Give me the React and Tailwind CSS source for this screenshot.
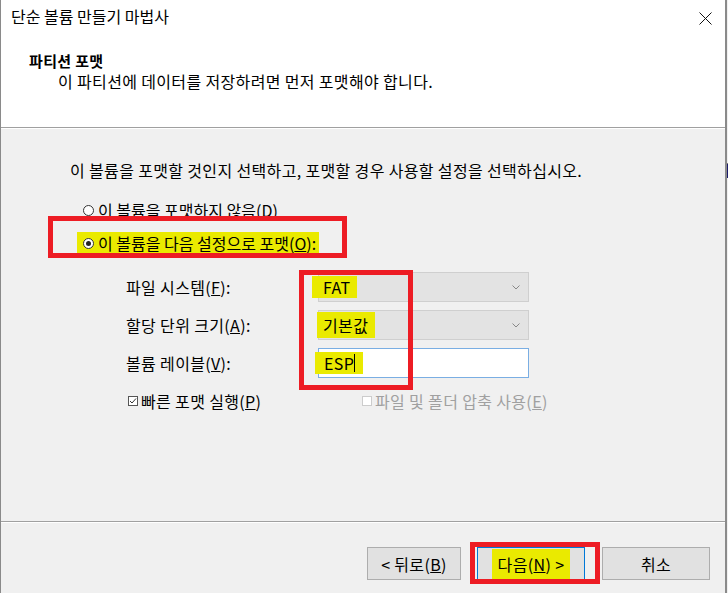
import { useState } from 'react';

const font = { fontFamily: '"Noto Sans CJK KR", "Noto Sans", sans-serif' };

function Radio({ checked }) {
  return (
    <span className="inline-flex w-[11px] h-[11px] rounded-full border border-[#333] bg-white items-center justify-center mr-[4px] shrink-0">
      {checked && <span className="w-[5px] h-[5px] rounded-full bg-[#222]" />}
    </span>
  );
}

function Check({ checked, disabled }) {
  return (
    <span
      className={
        'inline-flex w-[10px] h-[10px] border items-center justify-center mr-[3px] shrink-0 ' +
        (disabled ? 'border-[#ccc] bg-white' : 'border-[#555] bg-white')
      }
    >
      {checked && (
        <svg width="8" height="8" viewBox="0 0 8 8">
          <path d="M1 4 L3 6 L7 1.5" fill="none" stroke="#333" strokeWidth="1" />
        </svg>
      )}
    </span>
  );
}

function Combo({ children }) {
  return (
    <div className="w-[211px] h-[30px] bg-[#e3e3e3] border border-[#cfcfcf] flex items-center justify-between pr-[8px]">
      {children}
      <svg width="8" height="5" viewBox="0 0 8 5">
        <path d="M0.5 0.5 L4 4 L7.5 0.5" fill="none" stroke="#888" strokeWidth="1" />
      </svg>
    </div>
  );
}

function Mark({ children, className = '' }) {
  return <span className={'bg-[#eaea00] ' + className}>{children}</span>;
}

export default function App() {
  const [label, setLabel] = useState('ESP');

  return (
    <div className="w-[728px] h-[593px] relative overflow-hidden flex bg-[#2a2a2a] text-[#000] tracking-[0.35px]" style={font}>
      <div className="w-[727px] h-full flex flex-col bg-[#f0f0f0] border-l border-r-2 border-[#8a8a8a]">
        {/* header */}
        <div className="h-[128px] bg-white border-b border-[#a0a0a0] relative shrink-0">
          <div className="pl-[10px] pt-[6px] text-[16px] leading-[20px] tracking-normal">단순 볼륨 만들기 마법사</div>
          <svg className="absolute left-[698px] top-[12px]" width="13" height="13" viewBox="0 0 13 13">
            <path d="M0.5 0.5 L12.5 12.5 M12.5 0.5 L0.5 12.5" stroke="#111" strokeWidth="1" />
          </svg>
          <div className="pl-[28px] pt-[25px] text-[15px] leading-[20px] font-bold">파티션 포맷</div>
          <div className="pl-[57px] text-[16px] leading-[20px]">이 파티션에 데이터를 저장하려면 먼저 포맷해야 합니다.</div>
        </div>

        {/* body */}
        <div className="flex-1 border-t border-white pl-[69px] pt-[31px] text-[16px] leading-[20px]">
          <div>이 볼륨을 포맷할 것인지 선택하고, 포맷할 경우 사용할 설정을 선택하십시오.</div>

          <div className="flex items-center ml-[13px] mt-[20px] tracking-normal">
            <Radio />
            <span>
              이 볼륨을 포맷하지 않음(<u>D</u>)
            </span>
          </div>

          <div className="flex items-center ml-[7px] mt-[12px] tracking-normal">
            <Mark className="flex items-center pl-[6px] pr-[3px] py-[1px]">
              <Radio checked />
              <span>
                이 볼륨을 다음 설정으로 포맷(<u>O</u>):
              </span>
            </Mark>
          </div>

          <div className="ml-[56px] mt-[18px] grid grid-cols-[192px_211px] gap-y-[8px] items-center">
            <span>
              파일 시스템(<u>F</u>):
            </span>
            <Combo>
              <Mark className="-ml-[7px] pl-[11px] pr-[6px] py-[1px]">FAT</Mark>
            </Combo>
            <span>
              할당 단위 크기(<u>A</u>):
            </span>
            <Combo>
              <Mark className="-ml-[2px] pl-[6px] pr-[7px] py-[3px]">기본값</Mark>
            </Combo>
            <span>
              볼륨 레이블(<u>V</u>):
            </span>
            <div className="w-[211px] h-[30px] bg-white border border-[#7aaee3] flex items-center">
              <Mark className="-ml-[4px] flex items-center pl-[9px] pr-[8px] py-[1px]">
                <input
                  value={label}
                  onChange={(e) => setLabel(e.target.value)}
                  className="w-[31px] bg-transparent outline-none text-[16px] leading-[20px] p-0 tracking-[0.35px]"
                  style={font}
                />
                <span className="w-[1px] h-[18px] bg-black -ml-[1px]" />
              </Mark>
            </div>
          </div>

          <div className="ml-[58px] mt-[13px] flex items-center">
            <div className="w-[234px] flex items-center">
              <Check checked />
              <span>
                빠른 포맷 실행(<u>P</u>)
              </span>
            </div>
            <div className="flex items-center text-[#a0a0a0]">
              <Check disabled />
              <span>
                파일 및 폴더 압축 사용(<u>E</u>)
              </span>
            </div>
          </div>
        </div>

        {/* footer */}
        <div className="h-[72px] shrink-0 border-t border-[#a0a0a0] shadow-[inset_0_1px_0_#ffffff] flex items-start justify-end pt-[25px] pr-[15px] gap-[16px] text-[16px]">
          <button className="w-[94px] h-[33px] bg-[#e1e1e1] border border-[#adadad]" style={font}>
            &lt; 뒤로(<u>B</u>)
          </button>
          <div className="flex gap-[17px]">
            <button className="w-[108px] h-[33px] bg-[#e1e1e1] border border-[#0078d7] flex items-center justify-center" style={font}>
              <Mark className="px-[6px] py-[3px]">
                다음(<u>N</u>) &gt;
              </Mark>
            </button>
            <button className="w-[108px] h-[33px] bg-[#e1e1e1] border border-[#adadad]" style={font}>
              취소
            </button>
          </div>
        </div>
      </div>
      <div className="flex-1 flex flex-col">
        <div className="h-[163px] bg-[#f0f0f0]" />
        <div className="h-[1px] bg-[#777]" />
        <div className="h-[14px] bg-[#1a1a6a]" />
        <div className="flex-1 bg-[#f0f0f0]" />
      </div>

      {/* red annotation boxes */}
      <div className="absolute left-[48px] top-[216px] w-[299px] h-[42px] border-[5px] border-[#ed1c24] pointer-events-none" />
      <div className="absolute left-[299px] top-[270px] w-[114px] h-[120px] border-[5px] border-[#ed1c24] pointer-events-none" />
      <div className="absolute left-[470px] top-[542px] w-[130px] h-[42px] border-[5px] border-[#ed1c24] pointer-events-none" />
    </div>
  );
}
